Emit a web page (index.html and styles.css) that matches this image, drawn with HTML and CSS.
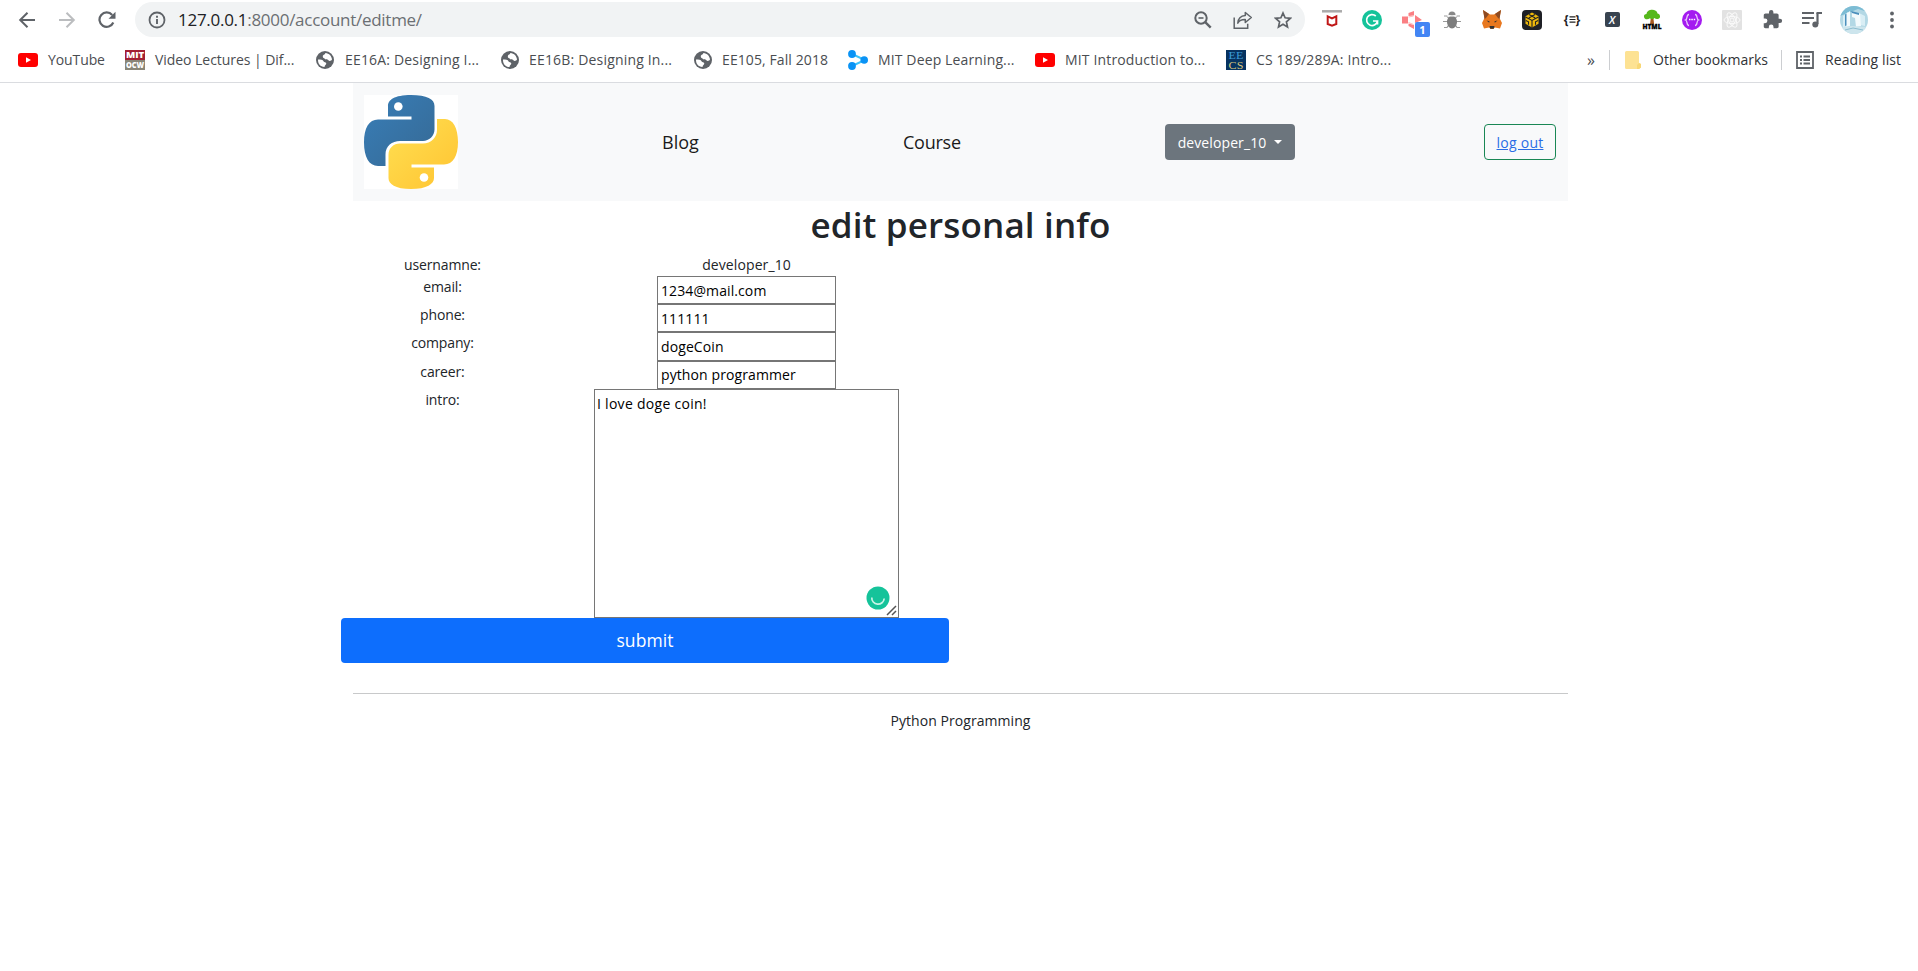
FILE: index.html
```html
<!DOCTYPE html>
<html lang="en">
<head>
<meta charset="utf-8">
<title>edit personal info</title>
<link rel="stylesheet" href="styles.css">
</head>
<body>
<svg class="defs" width="0" height="0">
  <defs>
    <symbol id="globe" viewBox="0 0 18 18">
      <circle cx="9" cy="9" r="9" fill="#5f6368"/>
      <path d="M2 8.500c2.500 0 5 .3 5.500 1.700s2.800.8 2.800 2.300-1.600 1.300-1.800 3.500C4.300 15.900 1.800 12.600 2 8.500zM6.800 5.500c0-2 2-1.400 2.600-3.500 3.800.3 6.300 3.200 6.600 6.500-1 1.900-3.100 1.800-3.800.5-.7-1-2.800-.4-3.500-1.300-.5-.8-1.900-.6-1.900-2.200z" fill="#fff"/>
    </symbol>
    <symbol id="youtube" viewBox="0 0 20 14">
      <rect width="20" height="14" rx="3" fill="#f00"/>
      <path d="M8 4.200l5 2.800L8 9.800z" fill="#fff"/>
    </symbol>
  </defs>
</svg>

<header class="browser">
  <div class="toolbar">
    <div class="nav-controls">
      <span class="tool"><svg width="18" height="18" viewBox="0 0 18 18" fill="none" stroke="#5f6368" stroke-width="2"><path d="M17 9H2.500M9.500 1.700L2.200 9l7.300 7.300"/></svg></span>
      <span class="tool"><svg width="18" height="18" viewBox="0 0 18 18" fill="none" stroke="#bbbdbf" stroke-width="2"><path d="M1 9h14.500M8.500 1.700L15.800 9l-7.300 7.300"/></svg></span>
      <span class="tool"><svg width="18" height="18" viewBox="0 0 18 18" fill="none" stroke="#5f6368" stroke-width="2.200"><path d="M15.300 11.500A7.200 7.200 0 1 1 14.200 4"/><path d="M17.500.7v7h-7z" fill="#5f6368" stroke="none"/></svg></span>
    </div>
    <div class="omnibox">
      <svg class="info" width="18" height="18" viewBox="0 0 18 18"><circle cx="9" cy="9" r="7.500" fill="none" stroke="#5f6368" stroke-width="1.800"/><path d="M9 8v5M9 4.800v2" stroke="#5f6368" stroke-width="1.900"/></svg>
      <span class="url"><span class="host">127.0.0.1</span>:8000/account/editme/</span>
      <span class="tool"><svg width="18" height="18" viewBox="0 0 18 18" fill="none" stroke="#5f6368" stroke-width="2"><circle cx="7" cy="7" r="5.700"/><path d="M11.200 11.200l5.500 5.500" stroke-width="2.400"/><path d="M4.500 7h5" stroke-width="1.600"/></svg></span>
      <span class="tool"><svg width="20" height="18" viewBox="0 0 20 18" fill="none" stroke="#5f6368" stroke-width="1.500"><path d="M1.200 6.500v10.700h13.500v-4.500"/><path d="M12.300 1.500l6 5-6 5V8.600C8.500 8.500 6 10 4.800 12.200c.3-4.500 3-7.500 7.500-7.800z" stroke-linejoin="round"/></svg></span>
      <span class="tool"><svg width="18" height="18" viewBox="0 0 18 18" fill="none" stroke="#5f6368" stroke-width="1.700"><path d="M9 2l2.100 4.800 5.200.5-3.900 3.500 1.100 5.100L9 13.200l-4.500 2.700 1.100-5.100-3.900-3.500 5.200-.5z"/></svg></span>
    </div>
    <div class="extensions">
      <span class="tool"><svg width="20" height="20" viewBox="0 0 20 20"><path d="M0 1.300h20" stroke="#aaa" stroke-width="2.500"/><path d="M5.700 6.300L10 8.500l4.300-2.200v7.700L10 15.600 5.700 14z" fill="none" stroke="#c01818" stroke-width="2"/></svg></span>
      <span class="tool"><svg width="20" height="20" viewBox="0 0 20 20"><circle cx="10" cy="10" r="10" fill="#15c39a"/><path d="M13.800 6A5.500 5.500 0 1 0 15.500 11H11M15.500 10.800v3.800" fill="none" stroke="#fff" stroke-width="1.700"/></svg></span>
      <span class="tool recorder"><svg width="20" height="18" viewBox="0 0 20 18" fill="#fa7f83"><path d="M0 5.500h6v7H0zM6.500 2l5.500-2v4.500L6.500 5zM13 4l7 5-7 3zM6.500 12.500l5.500 1.500v4l-5.500-3z"/><path d="M6.500 6l5-1M6.500 11.500l5 2" stroke="#fbb"/></svg><span class="badge">1</span></span>
      <span class="tool"><svg width="18" height="20" viewBox="0 0 18 20"><path d="M1 6h3l2 3M17 6h-3l-2 3M0 11.500h18M1 17.500h3l2-3M17 17.500h-3l-2-3" fill="none" stroke="#999" stroke-width="1.200"/><path d="M5.500 5a3.500 3.500 0 0 1 7 0z" fill="#888"/><ellipse cx="9" cy="12" rx="5" ry="6.500" fill="#7d7d7d"/><path d="M4 6h10" stroke="#eee" stroke-width="1.200"/></svg></span>
      <span class="tool"><svg width="20" height="20" viewBox="0 0 20 20"><path d="M1 0l7 4.500h4L19 0l-1.500 8 2.500 5-2 5.500-5-1-2 1.500H9l-2-1.500-5 1L0 13l2.500-5z" fill="#e8781f"/><path d="M1 0l6 4-3 4-1.500 1zM19 0l-6 4 3 4 1.500 1z" fill="#8d4a22"/><path d="M4.500 10.500l3 .7-.3 1.500zM15.500 10.500l-3 .7.3 1.500z" fill="#333"/><path d="M7.500 16h5l-.7 2.700H8.200z" fill="#333"/></svg></span>
      <span class="tool"><svg width="20" height="20" viewBox="0 0 20 20"><rect width="20" height="20" rx="4" fill="#1e2026"/><path d="M10 2.500l6.500 3.700v7.600L10 17.500l-6.500-3.700V6.200z" fill="#efb90b"/><path d="M3.500 7L10 10.500 16.500 7M10 10.500v7M7 4.500l6.200 3.400M13 4.500L6.800 7.900M3.800 10.500l2.700 1.300v3M16.200 10.500l-2.700 1.300v3" fill="none" stroke="#1e2026" stroke-width="1.100"/></svg></span>
      <span class="tool"><span class="braces">{<svg width="7" height="7" viewBox="0 0 7 7"><path d="M.5 .8h6M.5 3.500h6M.5 6.200h6" stroke="#222" stroke-width="1.200"/></svg>}</span></span>
      <span class="tool"><span class="xbox">X</span></span>
      <span class="tool"><svg class="tree" width="20" height="20" viewBox="0 0 20 20"><path d="M8.800 8h2.600l.8 6.500H8z" fill="#a85a20"/><path d="M2 7c-.5-2 1-3 2.500-3C5-1.500 15-1.500 15.500 3.500c2.500 0 3.500 4 1.500 5s-3.500.5-4.500-.5c-2 1.500-3 1.500-4.500.3C5.500 10 2.500 9.500 2 7z" fill="#56b81c"/><text x="10" y="19.300" text-anchor="middle" class="htmlmark" textLength="19" lengthAdjust="spacingAndGlyphs">HTML</text></svg></span>
      <span class="tool"><svg width="20" height="20" viewBox="0 0 20 20"><circle cx="10" cy="10" r="10" fill="#a41bf0"/><path d="M7 4.500c-3 0-1 4.500-3.500 5.500C6 11 4 15.500 7 15.500M13 4.500c3 0 1 4.500 3.500 5.500-2.500 1-.5 5.500-3.500 5.500" fill="none" stroke="#e9c8fb" stroke-width="1.300"/><path d="M7 9.500h1.500M9.300 9.500h1.500M11.700 9.500h1.500" stroke="#fff" stroke-width="1.500"/></svg></span>
      <span class="tool"><svg width="20" height="20" viewBox="0 0 20 20" fill="none" stroke="#fafafa" stroke-width="1"><rect width="20" height="20" rx="1" fill="#e2e2e2" stroke="none"/><circle cx="10" cy="10" r="2"/><ellipse cx="10" cy="10" rx="8" ry="3.500"/><ellipse cx="10" cy="10" rx="8" ry="3.500" transform="rotate(60 10 10)"/><ellipse cx="10" cy="10" rx="8" ry="3.500" transform="rotate(120 10 10)"/></svg></span>
      <span class="tool"><svg width="21" height="21" viewBox="0 0 24 24" fill="#5f6368"><path d="M20.500 11H19V7c0-1.100-.9-2-2-2h-4V3.500a2.500 2.500 0 0 0-5 0V5H4c-1.100 0-2 .9-2 2v3.800h1.500a2.700 2.700 0 0 1 0 5.400H2V20c0 1.100.9 2 2 2h3.800v-1.500a2.700 2.700 0 0 1 5.400 0V22H17c1.100 0 2-.9 2-2v-4h1.500a2.500 2.500 0 0 0 0-5z"/></svg></span>
      <span class="tool"><svg width="20" height="18" viewBox="0 0 20 18"><path d="M0 2h12M0 7h12M0 12h7.500M14.500 2H20" stroke="#5f6368" stroke-width="2"/><path d="M15.500 2v11" stroke="#5f6368" stroke-width="2.200"/><circle cx="13.300" cy="13.600" r="3" fill="#5f6368"/></svg></span>
    </div>
    <svg class="avatar" width="28" height="28" viewBox="0 0 28 28">
      <clipPath id="round"><circle cx="14" cy="14" r="14"/></clipPath>
      <g clip-path="url(#round)"><rect width="28" height="28" fill="#b3d8e5"/><path d="M0 0h28v6L18 3 0 10z" fill="#7cbcd4"/><path d="M3 10l5-4v14l-5 2zM19 7l6 3v10l-5-1z" fill="#d9eef5"/><path d="M6 8l4-3v15l-4 1zM12 6l8 2 1 12-5 1-1-9-3-1z" fill="#f3fafc"/><path d="M5 8.500l1.500-1v12L5 20zM11 5l8 2v2l-7-2z" fill="#4b8fbc"/><path d="M0 21l12-1 16 1v7H0z" fill="#cde5ed"/><path d="M5 24l8-2 10 2" stroke="#8bbccf" fill="none"/></g>
    </svg>
    <svg class="menu" width="4" height="18" viewBox="0 0 4 18" fill="#5f6368"><circle cx="2" cy="2.500" r="1.900"/><circle cx="2" cy="9" r="1.900"/><circle cx="2" cy="15.500" r="1.900"/></svg>
  </div>

  <div class="bookmarks">
    <span class="bookmark yt"><svg width="20" height="14"><use href="#youtube"/></svg><span>YouTube</span></span>
    <span class="bookmark ocw"><svg width="20" height="20" viewBox="0 0 20 20"><rect width="20" height="10" fill="#a31f34"/><rect y="10" width="20" height="10" fill="#8a8678"/><text x="1" y="8.300" class="mitmark" textLength="18" lengthAdjust="spacingAndGlyphs">MIT</text><text x="1" y="18.300" class="mitmark" textLength="18" lengthAdjust="spacingAndGlyphs">OCW</text></svg><span>Video Lectures | Dif...</span></span>
    <span class="bookmark ee16a"><svg width="18" height="18"><use href="#globe"/></svg><span>EE16A: Designing I...</span></span>
    <span class="bookmark ee16b"><svg width="18" height="18"><use href="#globe"/></svg><span>EE16B: Designing In...</span></span>
    <span class="bookmark ee105"><svg width="18" height="18"><use href="#globe"/></svg><span>EE105, Fall 2018</span></span>
    <span class="bookmark deep"><svg width="20" height="20" viewBox="0 0 20 20" fill="#0a93f5"><path d="M4 4l13 6-13 6" fill="none" stroke="#3cc3fb" stroke-width="2"/><circle cx="4" cy="4" r="3.900"/><circle cx="16.200" cy="10" r="3.800"/><circle cx="4" cy="16" r="3.900"/></svg><span>MIT Deep Learning...</span></span>
    <span class="bookmark intro-to"><svg width="20" height="14"><use href="#youtube"/></svg><span>MIT Introduction to...</span></span>
    <span class="bookmark cs189"><svg width="20" height="20" viewBox="0 0 20 20"><rect width="20" height="20" fill="#063361"/><text x="2.500" y="9" class="eemark" fill="#3c9ed8" textLength="15" lengthAdjust="spacingAndGlyphs">EE</text><text x="2.500" y="18.800" class="eemark" fill="#d9c77c" textLength="15" lengthAdjust="spacingAndGlyphs">CS</text></svg><span>CS 189/289A: Intro...</span></span>
    <span class="more">»</span>
    <span class="rule"></span>
    <span class="bookmark other"><svg width="16" height="18" viewBox="0 0 16 18"><path d="M1.500 0h11A1.500 1.500 0 0 1 14 1.500V12l2 1v3.500l-2 1.500H1.500A1.500 1.500 0 0 1 0 16.500v-15A1.500 1.500 0 0 1 1.500 0z" fill="#fde293"/><path d="M12 18v-4l2-2 2 1v3.500L14 18z" fill="#f8d775"/></svg><span>Other bookmarks</span></span>
    <span class="rule"></span>
    <span class="bookmark reading"><svg width="18" height="18" viewBox="0 0 18 18" fill="none" stroke="#5f6368" stroke-width="1.800"><path d="M1 1h16v16H1zM4 5.500h2M7.500 5.500H14M4 9h2M7.500 9H14M4 12.500h2M7.500 12.500H14"/></svg><span>Reading list</span></span>
  </div>
</header>

<main class="container">
  <nav class="navbar">
    <svg class="logo" width="94" height="94" viewBox="0 0 94 94">
      <defs>
        <linearGradient id="blue" x1="0" y1="0" x2="1" y2="1"><stop offset="0" stop-color="#387eb8"/><stop offset="1" stop-color="#366994"/></linearGradient>
        <linearGradient id="gold" x1="0" y1="0" x2="1" y2="1"><stop offset="0" stop-color="#ffe052"/><stop offset="1" stop-color="#ffc331"/></linearGradient>
      </defs>
      <rect width="94" height="94" fill="#fff"/>
      <path d="M47 0C30 0 24 5 24 11v10.500h23.500v3H14C5 24.500 0 33 0 47.500S5 71 14 71h7.500V59.500C21.500 51 28 46 36 46h23c6 0 11.500-5 11.500-11.500V11C70.500 4 63 0 47 0z" fill="url(#blue)"/>
      <path d="M73 24h8c8 0 13 9 13 23s-5 22.500-14 22.500H47.500v3H70V83c0 6-7 11-23 11s-22.500-5-22.500-11V60c0-7 5-11.500 11.500-11.500h23C67 48.500 73 42.500 73 35z" fill="url(#gold)"/>
      <circle cx="34.300" cy="11.500" r="4.300" fill="#fff"/><circle cx="60" cy="82.500" r="4.300" fill="#fff"/>
    </svg>
    <a class="nav-link blog">Blog</a>
    <a class="nav-link course">Course</a>
    <button class="btn user-menu"><span>developer_10</span><i class="caret"></i></button>
    <button class="btn logout"><a>log out</a></button>
  </nav>

  <h1>edit personal info</h1>

  <form class="profile">
    <div class="row"><label>usernamne:</label><div class="field plain">developer_10</div></div>
    <div class="row"><label>email:</label><div class="field"><input type="text" value="1234@mail.com"></div></div>
    <div class="row"><label>phone:</label><div class="field"><input type="text" value="111111"></div></div>
    <div class="row"><label>company:</label><div class="field"><input type="text" value="dogeCoin"></div></div>
    <div class="row"><label>career:</label><div class="field"><input type="text" value="python programmer"></div></div>
    <div class="row"><label>intro:</label>
      <div class="field"><div class="intro-box"><textarea spellcheck="false">I love doge coin!</textarea>
        <svg class="checker" width="24" height="24" viewBox="0 0 24 24"><circle cx="12" cy="12" r="11.500" fill="#15c39a"/><path d="M5.800 11.500a6.200 6.200 0 0 0 12.400 1" fill="none" stroke="#c9f3e7" stroke-width="1.700"/></svg>
        <svg class="grip" width="11" height="11" viewBox="0 0 11 11"><path d="M1 10L10 1M6 10l4-4" stroke="#555" stroke-width="1.500"/></svg>
      </div></div>
    </div>
    <button class="submit" type="button">submit</button>
  </form>

  <footer>Python Programming</footer>
</main>
</body>
</html>
```
FILE: styles.css
```css
* { box-sizing: border-box; }
body {
  margin: 0;
  background: #fff;
  color: #212529;
  font-family: "Open Sans", "Noto Sans", sans-serif;
  font-size: 14px;
  line-height: 21.6px;
}
svg { flex: none; display: block; }
.defs { position: absolute; }

/* Browser chrome */
.browser { height: 83px; border-bottom: 1px solid #dadce0; }
.toolbar { display: flex; align-items: center; height: 39px; padding-left: 7px; }
.tool { display: flex; align-items: center; justify-content: center; width: 40px; flex: none; }
.nav-controls { display: flex; width: 128px; }
.omnibox {
  display: flex;
  align-items: center;
  width: 1170px;
  height: 35px;
  padding: 0 2px 0 13px;
  border-radius: 18px;
  background: #f1f3f4;
}
.url { flex: 1; margin-left: 12px; color: #6b6f73; font-size: 17px; letter-spacing: -0.28px; white-space: nowrap; }
.host { color: #202124; }
.extensions { display: flex; height: 20px; margin-left: 7px; }
.recorder { position: relative; }
.badge {
  position: absolute;
  left: 23px;
  top: 12px;
  width: 15px;
  height: 15px;
  border-radius: 2px;
  background: #4285f4;
  color: #fff;
  font-size: 11px;
  font-weight: 700;
  line-height: 15px;
  text-align: center;
}
.braces { display: flex; align-items: center; color: #222; font-size: 12px; font-weight: 700; line-height: 14px; }
.xbox { width: 15px; height: 15px; border-radius: 2px; background: #38434f; color: #fff; font-size: 11px; font-style: italic; font-weight: 600; line-height: 15px; text-align: center; }
.tree { overflow: visible; }
.htmlmark { font: 800 6.500px "Open Sans", sans-serif; fill: #000; stroke: #000; stroke-width: .3px; }
.mitmark { font: 800 8px "Open Sans", sans-serif; fill: #fff; }
.eemark { font: 10.500px "Liberation Serif", serif; }
.avatar { margin-left: 8px; }
.menu { margin-left: 22px; }

.bookmarks { display: flex; align-items: center; height: 42px; padding-left: 18px; color: #4a4d51; white-space: nowrap; }
.bookmark { display: flex; align-items: center; gap: 10px; flex: none; }
.bookmark.yt { width: 107px; letter-spacing: -0.1px; }
.bookmark.ocw { width: 191px; letter-spacing: -0.05px; }
.bookmark.ee16a { width: 185px; gap: 11px; letter-spacing: 0.18px; }
.bookmark.ee16b { width: 193px; gap: 10px; letter-spacing: 0.18px; }
.bookmark.ee105 { width: 154px; gap: 10px; letter-spacing: 0.1px; }
.bookmark.deep { width: 187px; letter-spacing: 0.13px; }
.bookmark.intro-to { width: 191px; letter-spacing: 0.15px; }
.bookmark.cs189 { width: 361px; letter-spacing: 0.15px; }
.more { width: 22px; font-size: 16px; line-height: 16px; }
.rule { width: 1px; height: 20px; background: #ccced1; }
.bookmark.other { width: 171px; padding-left: 15px; gap: 12px; color: #303235; }
.bookmark.reading { padding-left: 14px; gap: 11px; color: #303235; letter-spacing: 0.1px; }

/* Page */
.container { width: 1215px; margin-left: 353px; }
.navbar { display: flex; align-items: center; height: 118px; padding-left: 11px; background: #f8f9fa; }
.nav-link { padding-top: 1px; color: #1b1b1b; font-size: 18px; white-space: nowrap; }
.blog { width: 241px; margin-left: 204px; }
.course { width: 262px; letter-spacing: -0.25px; }
.btn { display: flex; align-items: center; justify-content: center; height: 36px; padding: 0; border-radius: 4px; font: 14px "Open Sans", sans-serif; letter-spacing: 0.1px; white-space: nowrap; }
.user-menu { width: 130px; gap: 8px; border: 0; background: #6c757d; color: #fff; }
.caret { border: 4.500px solid transparent; border-top-color: #fff; border-bottom: 0; }
.logout { width: 72px; margin-left: 189px; border: 1px solid #198754; background: none; color: #2a6ee6; letter-spacing: 0.25px; }
.logout a { text-decoration: underline; }

h1 { height: 53px; margin: 0; font-size: 35px; font-weight: 600; line-height: 48px; text-align: center; letter-spacing: 0.15px; }

.profile { width: 608px; margin-left: -12px; }
.row { display: grid; grid-template-columns: 203px 405px; text-align: center; }
.row label { height: 21px; letter-spacing: -0.15px; line-height: 22.6px; }
.field { display: flex; justify-content: center; }
.plain { height: 22px; line-height: 22.6px; letter-spacing: 0.1px; }
input, textarea { display: block; margin: 0; border: 1px solid #767676; border-radius: 0; background: #fff; color: #000; font: 14px/21.6px "Open Sans", sans-serif; letter-spacing: 0.1px; }
input { width: 179px; height: 28.200px; padding: 1px 2px 1px 3px; }
.intro-box { position: relative; }
textarea { width: 305px; height: 229px; padding: 3px 2px; letter-spacing: 0.28px; resize: none; }
.checker { position: absolute; left: 272px; top: 197px; }
.grip { position: absolute; right: 2px; bottom: 2px; }
.submit { display: block; width: 608px; height: 45px; padding: 0 0 1px; border: 0; border-radius: 4px; background: #0d6efd; color: #fff; font: 17.500px "Open Sans", sans-serif; letter-spacing: 0.1px; }
footer { margin-top: 30px; padding-top: 16px; border-top: 1px solid #c8c9ca; text-align: center; letter-spacing: 0.06px; }
```
